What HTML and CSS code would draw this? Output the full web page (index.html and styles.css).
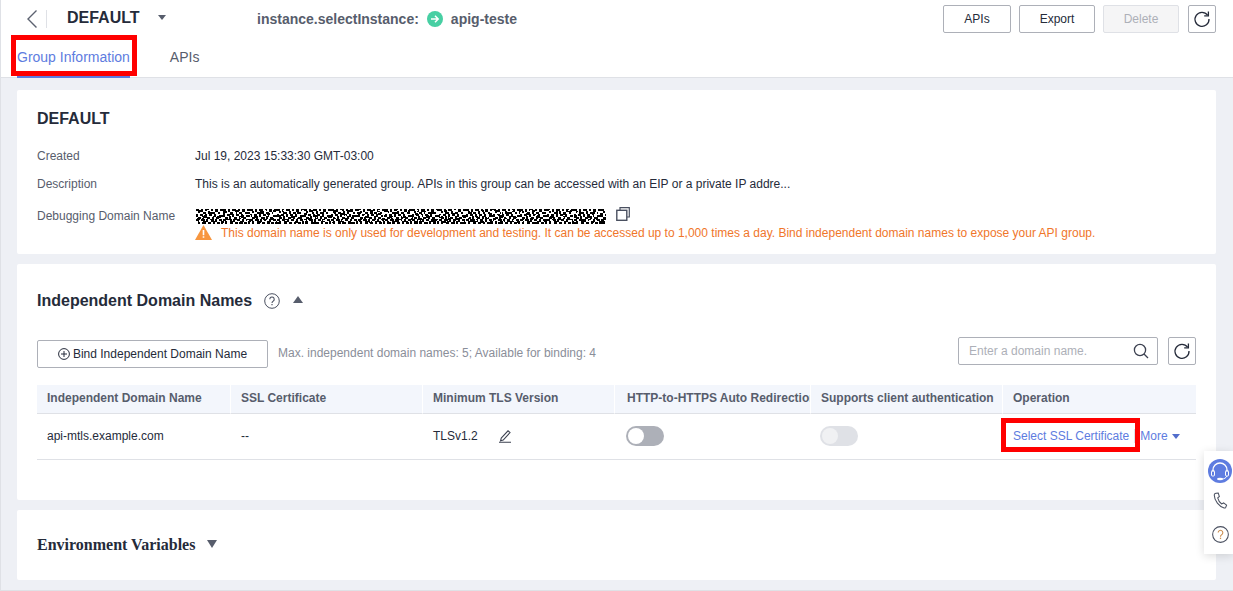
FILE: index.html
```html
<!DOCTYPE html>
<html lang="en">
<head>
<meta charset="utf-8">
<title>DEFAULT</title>
<link rel="stylesheet" href="styles.css">
</head>
<body>
<div class="page">
  <header class="top">
    <div class="bar">
      <svg class="back" width="12" height="20" viewBox="0 0 12 20"><path d="M10.5 1.5 2 10l8.5 8.5" fill="none" stroke="#5c6270" stroke-width="1.4"/></svg>
      <span class="vsep"></span>
      <span class="title">DEFAULT</span>
      <span class="caret down small"></span>
      <span class="inst">instance.selectInstance:</span>
      <svg class="go" width="16" height="16" viewBox="0 0 16 16"><circle cx="8" cy="8" r="8" fill="#47cfa3"/><path d="M4 8h7M8 4.8 11.2 8 8 11.2" fill="none" stroke="#fff" stroke-width="1.5"/></svg>
      <span class="inst">apig-teste</span>
      <div class="actions">
        <button class="btn w68">APIs</button>
        <button class="btn w76">Export</button>
        <button class="btn w76 off">Delete</button>
        <button class="btn sq"><svg width="18" height="18" viewBox="0 0 18 18"><path d="M14.6 5.2A7 7 0 1 0 16 9" fill="none" stroke="#252b3a" stroke-width="1.3"/><path d="M15.4 1.6v4.2h-4.2" fill="none" stroke="#252b3a" stroke-width="1.3"/></svg></button>
      </div>
    </div>
    <nav class="tabs">
      <a class="tab active">Group Information</a>
      <a class="tab">APIs</a>
    </nav>
    <span class="mark mark-tab"></span>
  </header>

  <main class="content">
    <section class="card info">
      <h2>DEFAULT</h2>
      <div class="row r1"><span class="lbl">Created</span><span>Jul 19, 2023 15:33:30 GMT-03:00</span></div>
      <div class="row r2"><span class="lbl">Description</span><span>This is an automatically generated group. APIs in this group can be accessed with an EIP or a private IP addre...</span></div>
      <div class="row r3">
        <span class="lbl">Debugging Domain Name</span>
        <div class="dbg">
          <div class="dom">
            <svg class="noise" width="410" height="15" viewBox="0 0 410 15">
              <defs>
                <pattern id="n" width="27" height="15" patternUnits="userSpaceOnUse">
                  <rect width="27" height="15" fill="#fff"/>
                  <path fill="#000" d="M0 0h3v2H0zM5 0h2v3H5zM9 0h4v2H9zM15 0h2v2h-2zM19 0h3v3h-3zM24 0h3v2h-3zM2 2h2v2H2zM7 3h3v2H7zM12 2h2v3h-2zM16 3h3v2h-3zM22 3h2v2h-2zM0 5h2v3H0zM4 5h3v2H4zM9 5h2v3H9zM13 5h3v2h-3zM18 5h2v3h-2zM23 6h4v2h-4zM2 8h3v2H2zM6 7h2v3H6zM11 8h3v2h-3zM16 7h2v3h-2zM20 8h3v2h-3zM0 10h3v2H0zM5 10h4v2H5zM10 10h2v3h-2zM14 10h3v2h-3zM19 10h2v3h-2zM23 10h3v2h-3zM2 12h2v3H2zM7 12h3v3H7zM12 13h3v2h-3zM17 12h2v3h-2zM21 13h3v2h-3zM25 12h2v3h-2z"/>
                </pattern>
                <pattern id="k" width="37" height="15" patternUnits="userSpaceOnUse">
                  <path fill="#000" d="M3 1h3v2H3zM13 3h4v2h-4zM27 1h2v4h-2zM34 4h3v2h-3zM8 6h3v3H8zM21 7h4v2h-4zM30 8h2v3h-2zM1 9h3v2H1zM15 10h3v3h-3zM25 12h3v2h-3zM35 12h2v3h-2zM6 13h4v2H6z"/>
                </pattern>
                <pattern id="w" width="19" height="15" patternUnits="userSpaceOnUse">
                  <path fill="#fff" d="M1 3h1v2H1zM11 1h2v1h-2zM6 8h1v1H6zM16 6h1v2h-1zM13 11h2v1h-2zM3 12h1v1H3z"/>
                </pattern>
              </defs>
              <rect width="410" height="15" fill="url(#n)"/>
              <rect width="410" height="15" fill="url(#k)"/>
              <rect width="410" height="15" fill="url(#w)"/>
            </svg>
            <svg class="copy" width="14" height="14" viewBox="0 0 14 14"><path d="M4 3V.7h9.3V10H11" fill="none" stroke="#4a5060" stroke-width="1.2"/><rect x=".8" y="3.3" width="10" height="10" fill="none" stroke="#4a5060" stroke-width="1.4"/></svg>
          </div>
          <div class="warn">
            <svg width="17" height="15" viewBox="0 0 17 15"><path d="M8.5 0 17 15H0z" fill="#f7963f"/><path d="M7.7 5h1.6v5.2H7.7zM7.7 11.2h1.6v1.6H7.7z" fill="#fff"/></svg>
            <span>This domain name is only used for development and testing. It can be accessed up to 1,000 times a day. Bind independent domain names to expose your API group.</span>
          </div>
        </div>
      </div>
    </section>

    <section class="card domains">
      <div class="head">
        <h3>Independent Domain Names</h3>
        <svg class="q" width="16" height="16" viewBox="0 0 16 16"><circle cx="8" cy="8" r="7.3" fill="none" stroke="#4a5060"/><path d="M5.8 6.2a2.2 2.2 0 1 1 3.4 1.9c-.8.5-1.2.9-1.2 1.9" fill="none" stroke="#4a5060" stroke-width="1.1"/><path d="M7.4 11h1.2v1.2H7.4z" fill="#4a5060"/></svg>
        <span class="caret up"></span>
      </div>
      <div class="tools">
        <button class="btn bind"><svg width="12" height="12" viewBox="0 0 12 12"><circle cx="6" cy="6" r="5.4" fill="none" stroke="#252b3a"/><path d="M6 3v6M3 6h6" stroke="#252b3a"/></svg>Bind Independent Domain Name</button>
        <span class="hint">Max. independent domain names: 5; Available for binding: 4</span>
        <div class="search"><span>Enter a domain name.</span><svg width="16" height="16" viewBox="0 0 16 16"><circle cx="7" cy="7" r="5.6" fill="none" stroke="#3c4150" stroke-width="1.3"/><path d="m11 11 4 4" stroke="#3c4150" stroke-width="1.3"/></svg></div>
        <button class="btn sq"><svg width="18" height="18" viewBox="0 0 18 18"><path d="M14.6 5.2A7 7 0 1 0 16 9" fill="none" stroke="#252b3a" stroke-width="1.3"/><path d="M15.4 1.6v4.2h-4.2" fill="none" stroke="#252b3a" stroke-width="1.3"/></svg></button>
      </div>
      <div class="table">
        <div class="th">Independent Domain Name</div>
        <div class="th">SSL Certificate</div>
        <div class="th">Minimum TLS Version</div>
        <div class="th clip">HTTP-to-HTTPS Auto Redirection</div>
        <div class="th">Supports client authentication</div>
        <div class="th">Operation</div>
        <div class="td first">api-mtls.example.com</div>
        <div class="td">--</div>
        <div class="td">TLSv1.2<svg class="edit" width="14" height="14" viewBox="0 0 14 14"><path d="M3.2 9.2 10 1.8l2 1.8-6.8 7.4-2.6.8zM1 13.3h12" fill="none" stroke="#3c4150" stroke-width="1.1"/></svg></div>
        <div class="td"><span class="sw"></span></div>
        <div class="td"><span class="sw dis"></span></div>
        <div class="td ops"><a class="link">Select SSL Certificate</a><span class="sep"></span><a class="link">More<span class="caret down tiny"></span></a><span class="mark mark-op"></span></div>
      </div>
    </section>

    <section class="card env">
      <h4>Environment Variables</h4>
      <span class="caret down"></span>
    </section>
  </main>

  <aside class="float">
    <span class="kf"><svg width="24" height="24" viewBox="0 0 24 24"><path d="M5 13v-2a7 7 0 0 1 14 0v2" fill="none" stroke="#fff" stroke-width="1.3"/><rect x="3.5" y="11.5" width="3" height="5.5" rx="1" fill="none" stroke="#fff"/><rect x="17.5" y="11.5" width="3" height="5.5" rx="1" fill="none" stroke="#fff"/><path d="M19 17c-1 2-3 3-5 3" fill="none" stroke="#fff"/><ellipse cx="12" cy="20" rx="3" ry="1.3" fill="#fff"/></svg></span>
    <svg class="ph" width="15" height="17" viewBox="0 0 16 18"><path d="M3 1.2 5.6 1l1.2 3.700L5 6.300c.6 2.600 2.200 5 4.300 6.400l2-1.100 3.200 2.400-1 2.400c-.3.500-1 .7-1.600.6C6.500 15.400 1.500 9.500 1.300 3c0-.8.7-1.600 1.700-1.800z" fill="none" stroke="#4a5060" stroke-width="1.1"/></svg>
    <svg class="hp" width="17" height="17" viewBox="0 0 16 16"><circle cx="8" cy="8" r="7.4" fill="none" stroke="#4a5060"/><path d="M5.8 6.2a2.2 2.2 0 1 1 3.4 1.9c-.8.5-1.2.9-1.2 1.9" fill="none" stroke="#c98a4a"/><path d="M7.4 11h1.2v1.2H7.4z" fill="#c98a4a"/></svg>
  </aside>
</div>
</body>
</html>
```
FILE: styles.css
```css
* { box-sizing: border-box; }
html, body { margin: 0; height: 100%; overflow: hidden; }
body { font-family: "Liberation Sans", Arial, sans-serif; font-size: 12px; color: #252b3a; }
button { font: inherit; }
.page { position: relative; width: 1233px; height: 591px; background: #eef0f5; border-left: 1px solid #dfe1e6; border-bottom: 1px solid #dfe1e6; overflow: hidden; }

.top { position: relative; height: 78px; background: #fff; border-bottom: 1px solid #dfe1e6; }
.bar { display: flex; align-items: center; height: 38px; padding: 0 17px 0 25px; }
.back { flex: none; }
.vsep { width: 1px; height: 18px; background: #dfe1e6; margin-left: 8px; }
.title { font-size: 16px; font-weight: 700; margin-left: 20px; width: 74px; margin-top: -3px; }
.caret { display: inline-block; width: 0; height: 0; border-left: 5px solid transparent; border-right: 5px solid transparent; }
.caret.down { border-top: 7px solid #575d6c; }
.caret.up { border-bottom: 7px solid #575d6c; margin-left: 13px; margin-top: -3px; }
.caret.small { border-left-width: 4px; border-right-width: 4px; border-top-width: 5px; margin: -4px 0 0 17px; }
.caret.tiny { border-left-width: 4px; border-right-width: 4px; border-top: 5px solid #526ecc; margin-left: 4px; vertical-align: 1px; }
.inst { font-size: 14px; font-weight: 700; color: #575d6c; }
.caret.small + .inst { margin-left: 91px; }
.go { margin: 0 8px; flex: none; }
.actions { margin-left: auto; display: flex; gap: 8px; }
.actions .sq { margin-left: 1px; }

.btn { display: inline-flex; align-items: center; justify-content: center; height: 28px; padding: 0; background: #fff; border: 1px solid #adb0b8; border-radius: 2px; color: #252b3a; font-size: 12px; }
.w68 { width: 68px; }
.w76 { width: 76px; }
.off { background: #f5f5f6; border-color: #dfe1e6; color: #adb0b8; }
.sq { width: 28px; }

.tabs { display: flex; gap: 40px; padding-left: 16px; height: 39px; }
.tab { height: 40px; line-height: 38px; font-size: 14px; color: #575d6c; }
.tab.active { color: #5e7ce0; border-bottom: 2px solid #5e7ce0; }

.mark { position: absolute; border: 5px solid #f00; pointer-events: none; }
.mark-tab { left: 10px; top: 35px; width: 126px; height: 41px; }

.content { display: flex; flex-direction: column; gap: 10px; padding: 12px 17px 0 16px; }
.card { background: #fff; border-radius: 2px; }
.info { height: 164px; padding: 20px 20px 0; }
h2 { margin: 0 0 21px; font-size: 16px; line-height: 18px; font-weight: 700; }
.row { display: flex; line-height: 14px; }
.lbl { width: 158px; flex: none; color: #575d6c; }
.r1 { margin-bottom: 14px; }
.r2 { margin-bottom: 18px; }
.dbg { display: flex; flex-direction: column; }
.dom { display: flex; align-items: flex-start; gap: 10px; height: 16px; margin-top: -1px; }
.noise { display: block; margin: 1px 0 0 1px; }
.copy { margin-top: -1px; }
.warn { display: flex; align-items: center; gap: 9px; height: 15px; margin-top: 1px; color: #f0762a; }

.domains { height: 236px; padding: 28px 20px 0; }
.head { display: flex; align-items: center; height: 18px; }
h3 { margin: 0; font-size: 16px; line-height: 18px; font-weight: 700; }
.q { margin-left: 12px; }
.tools { display: flex; align-items: flex-start; margin-top: 27px; height: 48px; }
.bind { width: 231px; gap: 3px; margin-top: 3px; }
.hint { margin: 9px 0 0 10px; color: #8a8e99; }
.search { margin-left: auto; width: 200px; height: 28px; border: 1px solid #adb0b8; border-radius: 2px; display: flex; align-items: center; justify-content: space-between; padding: 0 8px 0 10px; color: #adb0b8; }
.tools .sq { margin-left: 10px; }

.table { display: grid; grid-template-columns: 193px 192px 192px 196px 192px 194px; }
.th { height: 29px; background: #f3f6fc; border-bottom: 1px solid #dfe1e6; border-left: 1px solid #fff; padding-left: 10px; line-height: 27px; font-weight: 700; color: #575d6c; white-space: nowrap; overflow: hidden; }
.th:first-child { border-left: 0; }
.th.clip { padding-left: 12px; }
.td { position: relative; height: 46px; border-bottom: 1px solid #dfe1e6; padding: 0 0 2px 11px; display: flex; align-items: center; white-space: nowrap; }
.td.first { padding-left: 10px; }
.edit { margin-left: 20px; }
.sw { position: relative; display: block; width: 38px; height: 20px; border-radius: 10px; background: #adb0b8; margin-left: 1px; }
.sw::after { content: ""; position: absolute; left: 2px; top: 2px; width: 16px; height: 16px; border-radius: 50%; background: #fff; }
.sw.dis { background: #dfe1e6; margin-left: -1px; }
.sw.dis::after { background: #f0f1f3; }
.ops { gap: 5px; }
.sep { width: 1px; height: 14px; background: #dfe1e6; }
.link { color: #5e7ce0; }
.mark-op { left: -1px; top: 4px; width: 139px; height: 34px; }

.env { display: flex; align-items: center; height: 70px; padding: 0 20px; }
h4 { margin: 0; font-family: "Liberation Serif", "Times New Roman", serif; font-size: 16px; font-weight: 700; }
.env .caret { margin-left: 12px; border-top-width: 8px; margin-top: -2px; }

.float { position: absolute; left: 1203px; top: 451px; width: 29px; height: 103px; padding-left: 4px; background: #fff; box-shadow: 0 2px 10px rgba(0,0,0,.14); display: flex; flex-direction: column; align-items: flex-start; }
.kf { display: flex; align-items: center; justify-content: center; flex: none; width: 24px; height: 24px; border-radius: 50%; background: #5e7ce0; margin-top: 8px; }
.ph { margin: 9px 0 0 5px; }
.hp { margin: 17px 0 0 4px; }
```
